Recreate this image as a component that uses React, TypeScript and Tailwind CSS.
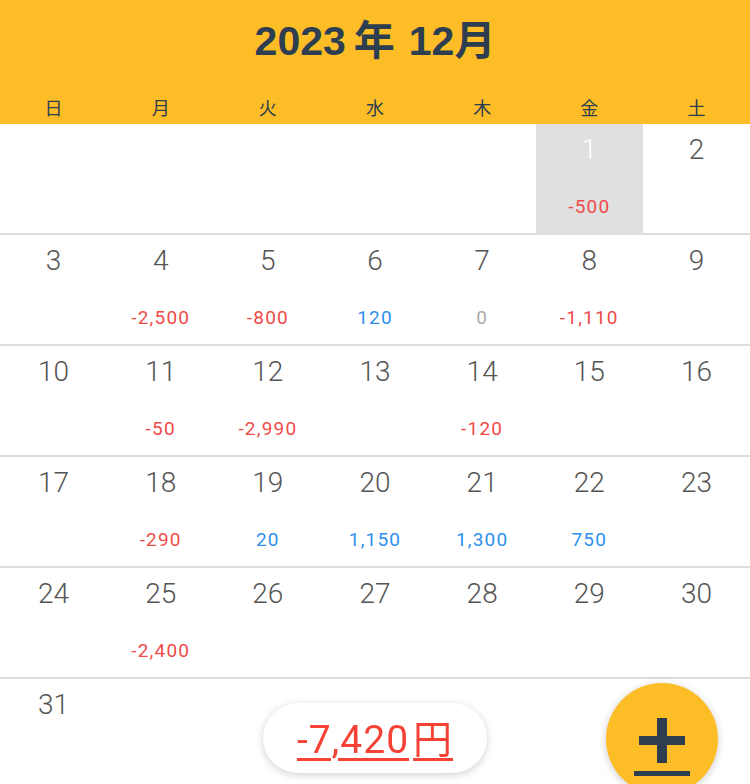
import React from "react";

type Cell = { day?: number; amount?: number; selected?: boolean };

const amounts: Record<number, number> = {
  1: -500,
  4: -2500,
  5: -800,
  6: 120,
  7: 0,
  8: -1110,
  11: -50,
  12: -2990,
  14: -120,
  18: -290,
  19: 20,
  20: 1150,
  21: 1300,
  22: 750,
  25: -2400,
};

const weekdays = ["日", "月", "火", "水", "木", "金", "土"];

function buildCells(): Cell[] {
  const cells: Cell[] = [];
  for (let i = 0; i < 5; i++) cells.push({});
  for (let d = 1; d <= 31; d++) {
    cells.push({ day: d, amount: amounts[d], selected: d === 1 });
  }
  while (cells.length % 7 !== 0) cells.push({});
  return cells;
}

function fmt(n: number) {
  const s = Math.abs(n).toLocaleString("en-US");
  return n < 0 ? "-" + s : s;
}

function amountClass(n: number) {
  if (n < 0) return "text-[#ef4b4b]";
  if (n > 0) return "text-[#2e90ee]";
  return "text-[#aaaaaa]";
}

export default function App() {
  const cells = buildCells();
  const font = { fontFamily: '"Liberation Sans", "Noto Sans CJK JP", sans-serif' };
  const thin = { fontFamily: 'Roboto, "Noto Sans CJK JP", sans-serif' };
  return (
    <div className="w-[750px] bg-white relative" style={font}>
      <div className="bg-[#fdbd26]">
        <div className="h-[84px] pb-[4px] flex items-center justify-center">
          <span className="text-[41px] font-bold text-[#2c3e50] flex items-baseline">
            <span>2023</span>
            <span className="ml-[8px]" style={{ fontFamily: '"Noto Sans CJK JP", sans-serif' }}>年</span>
            <span className="ml-[14px]">12</span>
            <span style={{ fontFamily: '"Noto Sans CJK JP", sans-serif' }}>月</span>
          </span>
        </div>
        <div className="h-[40px] pt-[7px] grid grid-cols-7">
          {weekdays.map((w) => (
            <div
              key={w}
              className="flex items-center justify-center text-[18px] text-[#2c3e50]"
              style={{ fontFamily: '"Noto Sans CJK JP", sans-serif' }}
            >
              {w}
            </div>
          ))}
        </div>
      </div>
      <div className="grid grid-cols-7">
        {cells.map((c, i) => (
          <div
            key={i}
            className={
              "h-[111px] flex flex-col items-center " +
              (c.selected ? "bg-[#e0e0e0]" : "border-b-2 border-[#dddddd]")
            }
          >
            {c.day !== undefined && (
              <>
                <div
                  className={
                    "h-[52px] leading-[52px] text-[28px] font-light " +
                    (c.selected ? "text-white" : "text-[#555555]")
                  }
                  style={thin}
                >
                  {c.day}
                </div>
                {c.amount !== undefined && (
                  <div
                    className={
                      "mt-[16px] h-[30px] leading-[30px] text-[19px] tracking-[1.2px] " +
                      amountClass(c.amount)
                    }
                    style={thin}
                  >
                    {fmt(c.amount)}
                  </div>
                )}
              </>
            )}
          </div>
        ))}
      </div>

      <div className="fixed left-[263px] top-[703px] w-[224px] h-[70px] rounded-full bg-white shadow-[0_2px_8px_rgba(0,0,0,0.18)] flex items-center justify-center">
        <span
          className="text-[39px] text-[#f44336] underline decoration-[3px] underline-offset-[5px] tracking-[1px]"
          style={thin}
        >
          -7,420<span className="ml-[4px]" style={{ fontFamily: '"Noto Sans CJK JP", sans-serif' }}>円</span>
        </span>
      </div>

      <div className="fixed left-[606px] top-[683px] w-[112px] h-[112px] rounded-full bg-[#fdbd26] shadow-[0_2px_8px_rgba(0,0,0,0.2)]">
        <svg width="112" height="112" viewBox="0 0 112 112" className="absolute left-0 top-0">
          <rect x="51" y="35" width="10" height="45" fill="#2c3e50" />
          <rect x="33" y="53" width="46" height="9" fill="#2c3e50" />
          <rect x="28" y="88" width="56" height="5" fill="#2c3e50" />
        </svg>
      </div>
    </div>
  );
}
